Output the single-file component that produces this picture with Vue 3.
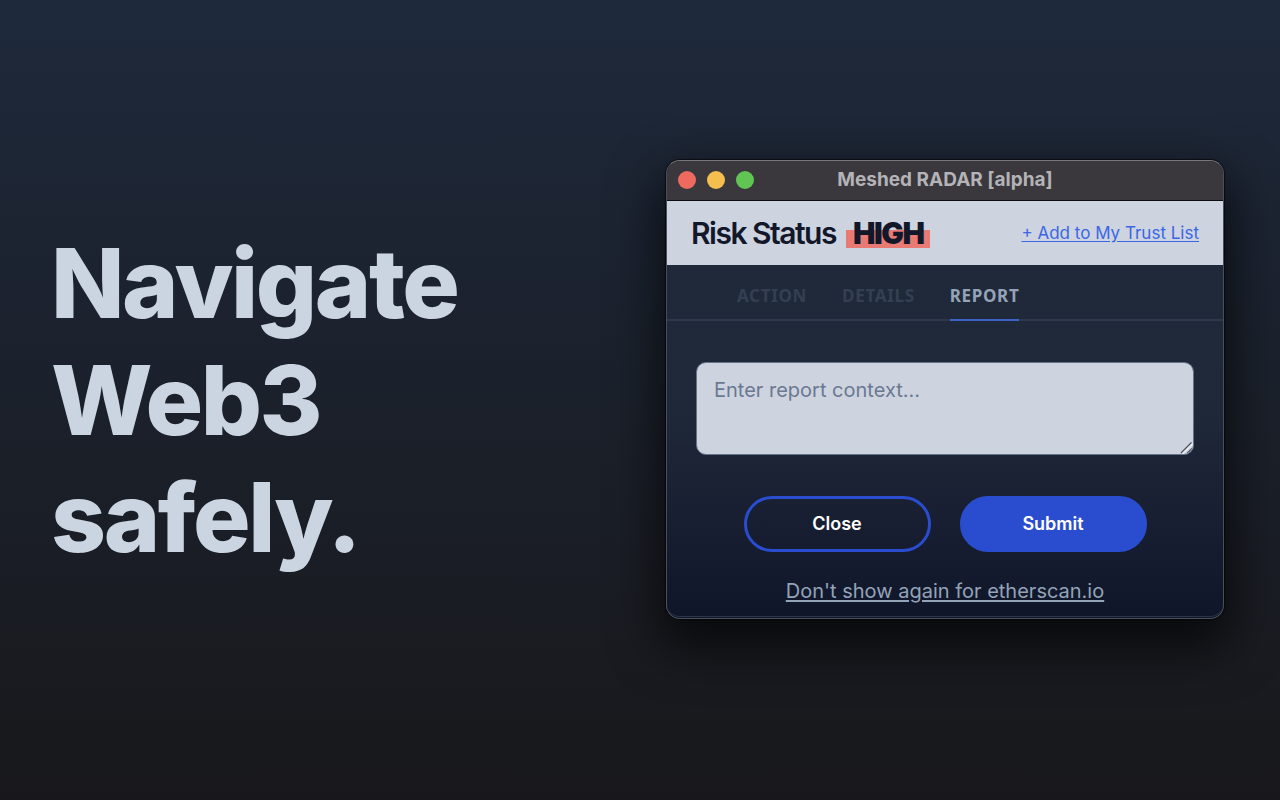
<script setup>
import { ref } from 'vue'

const tabs = ['Action', 'Details', 'Report']
const activeTab = ref('Report')
const context = ref('')
</script>

<template>
  <main class="page">
    <h1 class="headline">Navigate<br />Web3<br />safely.</h1>

    <section class="window" aria-label="Meshed RADAR">
      <header class="titlebar">
        <div class="lights">
          <button class="light red" type="button" aria-label="Close window"></button>
          <button class="light yellow" type="button" aria-label="Minimise window"></button>
          <button class="light green" type="button" aria-label="Zoom window"></button>
        </div>
        <span class="title">Meshed RADAR [alpha]</span>
      </header>

      <div class="status">
        <h2 class="risk">Risk Status <mark class="level">HIGH</mark></h2>
        <a class="trust" href="#trust">+ Add to My Trust List</a>
      </div>

      <nav class="tabs">
        <button
          v-for="tab in tabs"
          :key="tab"
          type="button"
          class="tab"
          :class="{ active: tab === activeTab }"
          @click="activeTab = tab"
        >{{ tab }}</button>
      </nav>

      <form class="report" @submit.prevent>
        <div class="field">
          <textarea v-model="context" class="context" aria-label="Report context" placeholder="Enter report context..."></textarea>
          <svg class="grip" width="13" height="13" viewBox="0 0 13 13" fill="none" aria-hidden="true">
            <path d="M2.5 12.5 12.5 2.5M9 12.5 12.5 9" stroke="#eef0f3" stroke-width="2" />
            <path d="M1 12 11.500 1.500M7 12.500 12 7.500" stroke="#4c5056" stroke-width="1.300" />
          </svg>
        </div>
        <div class="actions">
          <button class="btn outline" type="button">Close</button>
          <button class="btn solid" type="submit">Submit</button>
        </div>
        <a class="mute" href="#mute">Don't show again for etherscan.io</a>
      </form>
    </section>
  </main>
</template>

<style>
body {
  background: #18181b;
}
</style>

<style scoped>
.page {
  box-sizing: border-box;
  min-height: 100vh;
  padding: 0 56px 0 51px;
  display: flex;
  align-items: center;
  justify-content: space-between;
  gap: 48px;
  background: linear-gradient(#1e293b, #18181b);
  font-family: Inter, sans-serif;
}

.page * {
  box-sizing: border-box;
}

.headline {
  margin: 0;
  font-size: 96px;
  line-height: 117px;
  font-weight: 800;
  letter-spacing: -0.025em;
  color: #cbd5e1;
}

.window {
  flex: 0 1 558px;
  margin-bottom: 21px;
  overflow: hidden;
  border: 1px solid #4b4f5c;
  border-top-color: #77767b;
  border-radius: 14px;
  background: linear-gradient(#202939 36%, #1f2839 55%, #10162a);
  box-shadow: 0 0 1px 1px rgba(0, 0, 0, 0.6), 0 22px 50px 6px rgba(0, 0, 0, 0.68);
}

.titlebar {
  display: grid;
  grid-template-columns: 1fr auto 1fr;
  align-items: center;
  height: 40px;
  padding: 0 11px 2px;
  border-bottom: 1px solid #0c0c0e;
  background: #3a383c;
}

.lights {
  display: flex;
  gap: 11px;
}

.light {
  width: 18px;
  height: 18px;
  padding: 0;
  border: 0;
  border-radius: 50%;
}

.red {
  background: #ed6a5e;
}

.yellow {
  background: #f5bf4f;
}

.green {
  background: #61c554;
}

.title {
  font-size: 19px;
  font-weight: 700;
  color: #b4b3b7;
}

.status {
  display: flex;
  align-items: center;
  justify-content: space-between;
  height: 64px;
  padding: 0 24px;
  background: #cdd4e0;
}

.risk {
  margin: 0;
  font-size: 30px;
  line-height: 32px;
  font-weight: 600;
  letter-spacing: -0.05em;
  color: #12172a;
}

.level {
  margin-left: 4px;
  padding: 0 7px;
  font-weight: 900;
  color: inherit;
  background: linear-gradient(transparent 42%, #e97a73 42%, #e97a73 92%, transparent 92%);
}

.trust {
  font-size: 17px;
  line-height: 24px;
  color: #3b66e5;
  text-underline-offset: 2px;
}

.tabs {
  display: flex;
  gap: 35px;
  height: 56px;
  padding-left: 70px;
  border-bottom: 2px solid #2f394b;
}

.tab {
  height: 56px;
  padding: 6px 0 0;
  border: 0;
  border-bottom: 2px solid transparent;
  background: none;
  font-family: "Noto Sans", sans-serif;
  font-size: 17px;
  font-weight: 700;
  letter-spacing: 0.04em;
  text-transform: uppercase;
  color: #344052;
}

.tab.active {
  border-bottom-color: #3b64c8;
  color: #94a3b8;
}

.report {
  display: flex;
  flex-direction: column;
  align-items: center;
  padding: 41px 29px 13px;
  border-bottom: 1px solid #2c3547;
  border-radius: 0 0 13px 13px;
  margin-bottom: 1px;
}

.field {
  position: relative;
  width: 100%;
}

.context {
  display: block;
  width: 100%;
  height: 93px;
  padding: 14px 17px;
  border: 1px solid #64748b;
  border-radius: 10px;
  background: #cdd4e0;
  font: 20px/26px Inter, sans-serif;
  color: #1e293b;
  resize: vertical;
}

.context::-webkit-resizer {
  background: transparent;
}

.context::placeholder {
  color: #6b7890;
}

.grip {
  position: absolute;
  right: 1px;
  bottom: 1px;
  border-bottom-right-radius: 9px;
  overflow: hidden;
  pointer-events: none;
}

.actions {
  display: flex;
  gap: 29px;
  margin: 41px 0 27px;
}

.btn {
  width: 187px;
  height: 56px;
  border: 3px solid #2a4dd0;
  border-radius: 28px;
  font: 600 18px/24px Inter, sans-serif;
  color: #fff;
}

.outline {
  background: transparent;
}

.solid {
  background: #2a4dd0;
}

.mute {
  font-size: 20px;
  line-height: 24px;
  color: #94a3b8;
  text-underline-offset: 2px;
}
</style>
